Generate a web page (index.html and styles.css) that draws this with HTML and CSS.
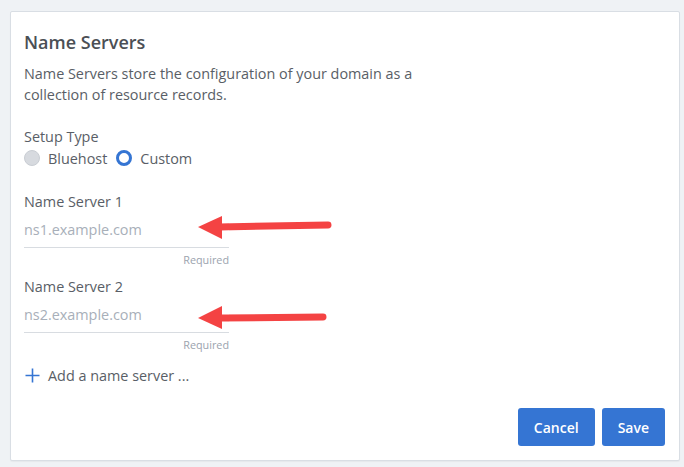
FILE: index.html
```html
<!DOCTYPE html>
<html lang="en">
<head>
  <meta charset="UTF-8" />
  <title>Name Servers</title>
  <link rel="stylesheet" href="styles.css">
</head>
<body>
  <div class="card">
    <h2 class="title">Name Servers</h2>
    <p class="desc">Name Servers store the configuration of your domain as a collection of resource records.</p>

    <div class="label setup-label">Setup Type</div>
    <div class="radios">
      <label class="radio"><span class="dot"></span>Bluehost</label>
      <label class="radio"><span class="dot checked"></span>Custom</label>
    </div>

    <div class="field first">
      <label class="label" for="ns1">Name Server 1</label>
      <input type="text" id="ns1" placeholder="ns1.example.com" />
      <div class="hint">Required</div>
      <svg class="arrow a1" width="136" height="28" viewBox="0 0 136 28">
        <line x1="24" y1="14" x2="132" y2="12" stroke="#f44343" stroke-width="7" stroke-linecap="round" />
        <polygon points="2,14 26,3 26,26" fill="#f44343" />
      </svg>
    </div>

    <div class="field">
      <label class="label" for="ns2">Name Server 2</label>
      <input type="text" id="ns2" placeholder="ns2.example.com" />
      <div class="hint">Required</div>
      <svg class="arrow a2" width="136" height="28" viewBox="0 0 136 28">
        <line x1="24" y1="14" x2="127" y2="13" stroke="#f44343" stroke-width="7" stroke-linecap="round" />
        <polygon points="2,14 26,2 26,25" fill="#f44343" />
      </svg>
    </div>

    <div class="add-row">
      <svg width="15" height="15" viewBox="0 0 15 15">
        <path d="M7.5 0.5v14M0.5 7.5h14" stroke="#3575d3" stroke-width="1.6" fill="none" />
      </svg>
      <span>Add a name server ...</span>
    </div>

    <div class="actions">
      <button type="button" class="btn">Cancel</button>
      <button type="button" class="btn">Save</button>
    </div>
  </div>
</body>
</html>
```

FILE: styles.css
```css
body {
  margin: 0;
  padding: 11px 4px 6px 10px;
  background-color: #eff2f5;
  font-family: 'Open Sans', sans-serif;
  color: #595e66;
}
.card {
  width: 642px;
  padding: 18px 13px 14px 13px;
  background-color: white;
  border: 1px solid #d9dee4;
  border-radius: 2px;
  box-shadow: 0 1px 1px rgba(0, 0, 0, 0.04);
}
.title {
  margin: 0;
  font-size: 18px;
  line-height: 24px;
  font-weight: 600;
  color: #4b4f55;
}
.desc {
  margin: 9px 0 0 0;
  max-width: 430px;
  font-size: 14.4px;
  line-height: 21px;
}
.label {
  display: block;
  font-size: 14.4px;
  line-height: 21px;
}
.setup-label {
  margin-top: 21px;
}
.radios {
  display: flex;
  gap: 9px;
  height: 22px;
  align-items: center;
}
.radio {
  display: flex;
  align-items: center;
  gap: 8px;
  font-size: 14.4px;
  line-height: 21px;
}
.dot {
  width: 16px;
  height: 16px;
  box-sizing: border-box;
  border-radius: 50%;
  background-color: #d7dadf;
  border: 1px solid #c9cdd3;
}
.dot.checked {
  background-color: white;
  border: 3px solid #3575d3;
}
.field {
  position: relative;
  width: 205px;
  margin-top: 9px;
}
.field.first {
  margin-top: 22px;
}
.field input {
  display: block;
  width: 100%;
  height: 36px;
  box-sizing: border-box;
  padding: 0;
  border: none;
  border-bottom: 1px solid #d8dce1;
  outline: none;
  font-family: 'Open Sans', sans-serif;
  font-size: 14.4px;
  color: #595e66;
  background: transparent;
}
.field input::placeholder {
  color: #a8afb9;
}
.hint {
  margin-top: 5px;
  text-align: right;
  font-size: 10.8px;
  line-height: 14px;
  color: #9ba3ae;
}
.arrow {
  position: absolute;
  left: 172px;
}
.a1 {
  top: 22px;
}
.a2 {
  top: 28px;
}
.add-row {
  display: flex;
  align-items: center;
  gap: 8px;
  margin-top: 13px;
  padding-left: 1px;
  font-size: 14.4px;
  line-height: 21px;
}
.actions {
  display: flex;
  justify-content: flex-end;
  gap: 7px;
  margin-top: 22px;
  padding-right: 1px;
}
.btn {
  height: 38px;
  padding: 0 16px;
  background-color: #3575d3;
  color: white;
  border: none;
  border-radius: 3px;
  font-family: 'Open Sans', sans-serif;
  font-size: 14px;
  font-weight: 600;
  cursor: pointer;
}
```
